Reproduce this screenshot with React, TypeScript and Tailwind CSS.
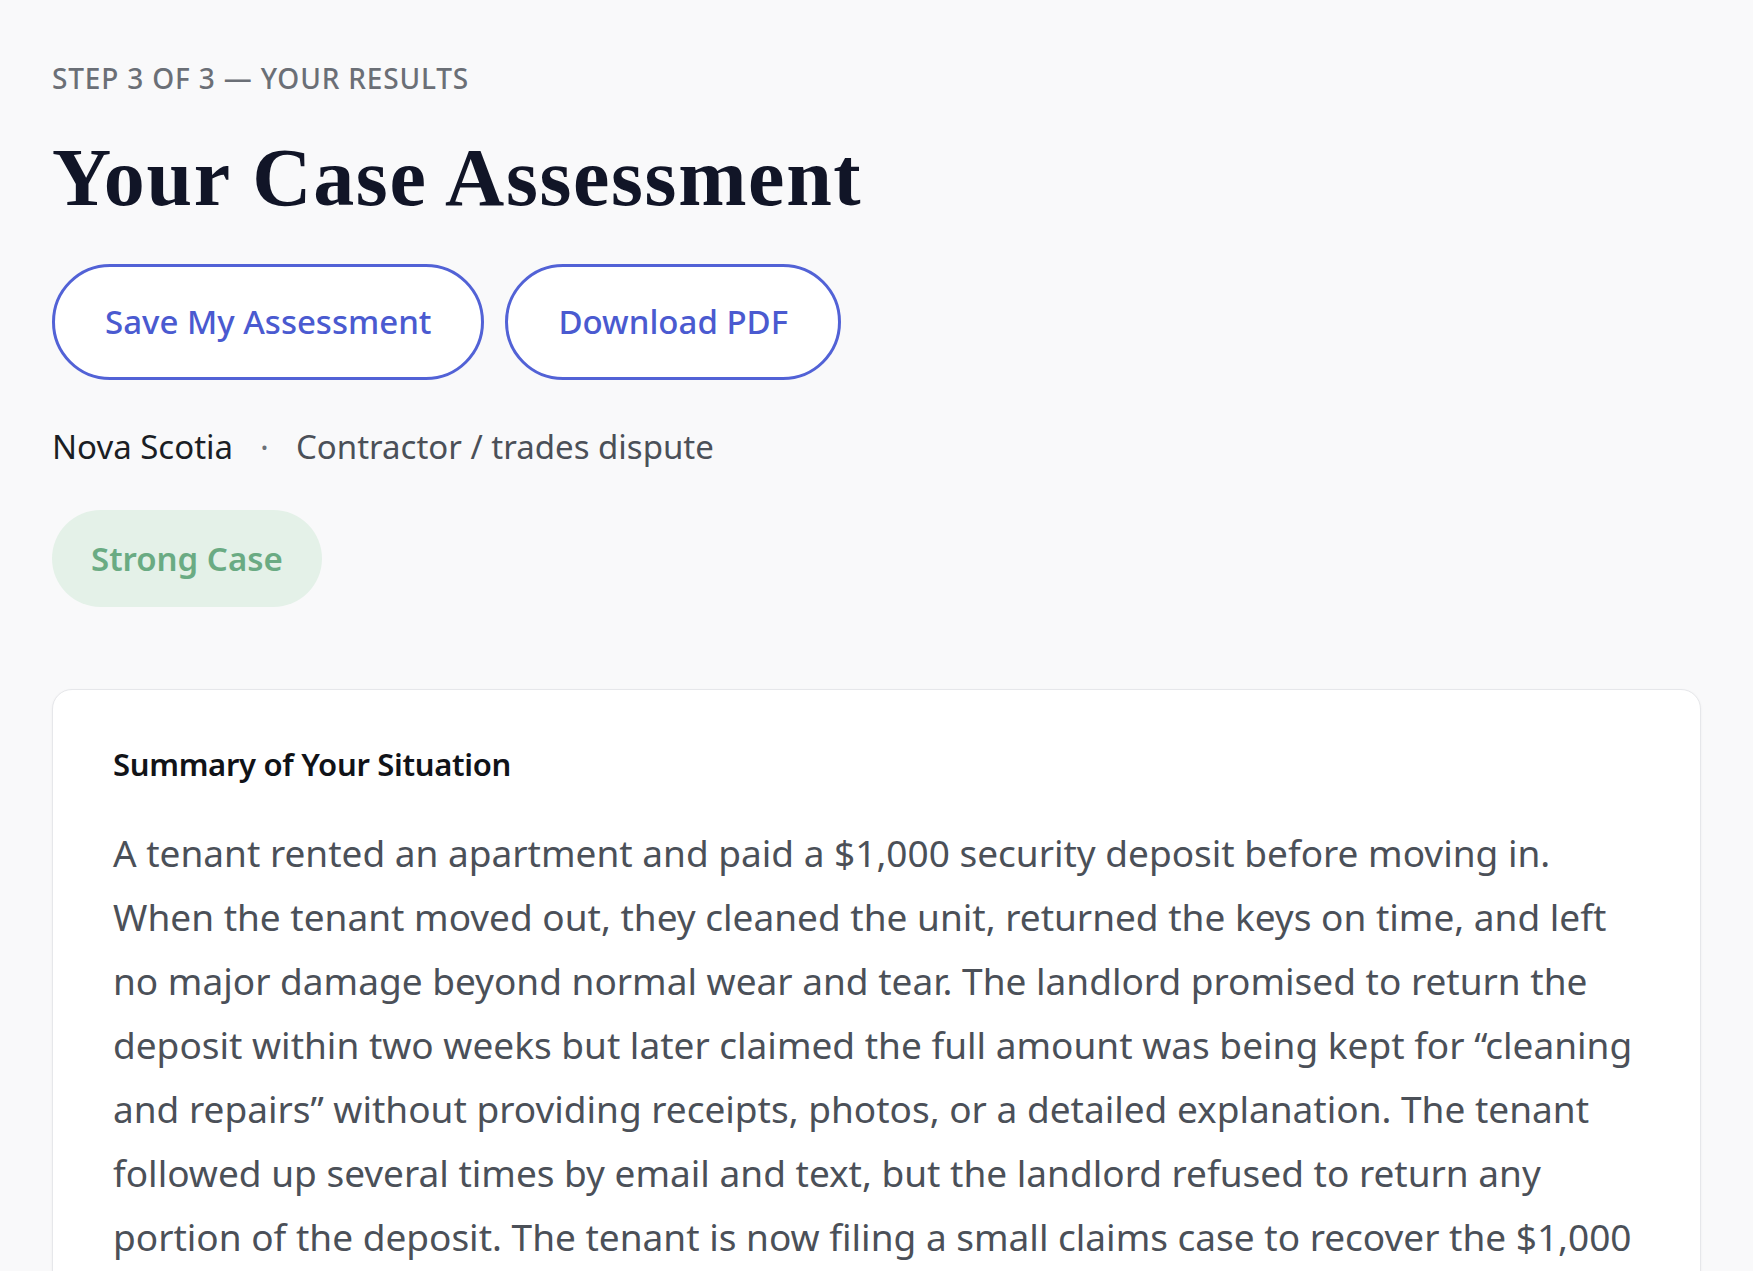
import React from 'react';

const sans = "font-['Noto_Sans',sans-serif]";

const summaryText =
  'A tenant rented an apartment and paid a $1,000 security deposit before moving in. When the tenant moved out, they cleaned the unit, returned the keys on time, and left no major damage beyond normal wear and tear. The landlord promised to return the deposit within two weeks but later claimed the full amount was being kept for \u201ccleaning and repairs\u201d without providing receipts, photos, or a detailed explanation. The tenant followed up several times by email and text, but the landlord refused to return any portion of the deposit. The tenant is now filing a small claims case to recover the $1,000 deposit, plus any applicable interest and filing costs.';

const OutlineButton: React.FC<{ label: string }> = ({ label }) => (
  <button className="h-[116px] rounded-full border-[3px] border-[#5262d6] bg-white px-[50px] text-[33px] font-medium text-[#4a5ad0]">
    {label}
  </button>
);

export default function App() {
  return (
    <div className={`min-h-screen bg-[#f9f9fa] px-[52px] pt-[62px] ${sans}`}>
      <p className="text-[28px] font-medium leading-[32px] tracking-[0.03em] text-[#6b6f76]">
        STEP 3 OF 3 — YOUR RESULTS
      </p>

      <h1 className="mt-[40px] font-['Liberation_Serif',serif] text-[82px] font-bold leading-[88px] tracking-[0.02em] text-[#111527]">
        Your Case Assessment
      </h1>

      <div className="mt-[42px] flex gap-[21px]">
        <OutlineButton label="Save My Assessment" />
        <OutlineButton label="Download PDF" />
      </div>

      <div className="mt-[47px] flex items-center text-[33px] leading-[40px]">
        <span className="text-[#1b1e24]">Nova Scotia</span>
        <span className="mx-[27px] text-[#6b7078]">·</span>
        <span className="text-[#4b5058]">Contractor / trades dispute</span>
      </div>

      <div className="mt-[43px]">
        <span className="inline-flex h-[97px] items-center rounded-full bg-[#e4f1e8] px-[39px] text-[33px] font-semibold text-[#6aab83]">
          Strong Case
        </span>
      </div>

      <section className="mt-[82px] rounded-[20px] border border-[#e6e7ea] bg-white px-[60px] pt-[54px] pb-[60px] shadow-[0_1px_3px_rgba(0,0,0,0.05)]">
        <h2 className="text-[31px] font-semibold leading-[40px] tracking-[-0.01em] text-[#111318]">
          Summary of Your Situation
        </h2>
        <p className="mt-[37px] text-[37px] leading-[64px] text-[#4b5058]">{summaryText}</p>
      </section>
    </div>
  );
}
